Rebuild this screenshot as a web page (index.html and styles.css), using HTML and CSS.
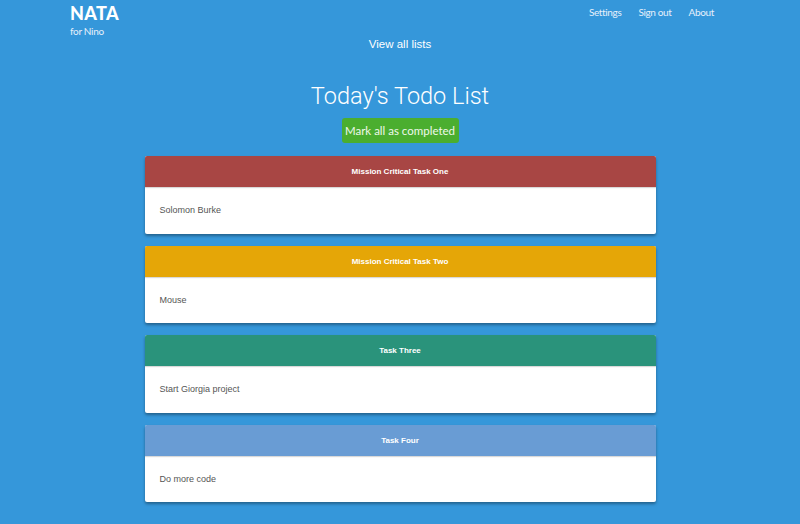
FILE: index.html
```html
<!DOCTYPE html>
<html>
<head>
<meta charset="utf-8">
<link rel="stylesheet" href="styles.css">
</head>
<body>
<header class="topbar">
  <div class="brand">
    <div class="logo">NATA</div>
    <div class="sub">for Nino</div>
  </div>
  <nav class="links">
    <a>Settings</a>
    <a>Sign out</a>
    <a>About</a>
  </nav>
</header>
<div class="viewall">View all lists</div>
<h1 class="title">Today's Todo List</h1>
<div class="btnrow"><button class="btn">Mark all as completed</button></div>
<main class="cards">
  <section class="card">
    <div class="card-head red">Mission Critical Task One</div>
    <div class="card-body">Solomon Burke</div>
  </section>
  <section class="card">
    <div class="card-head yellow">Mission Critical Task Two</div>
    <div class="card-body">Mouse</div>
  </section>
  <section class="card">
    <div class="card-head teal">Task Three</div>
    <div class="card-body">Start Giorgia project</div>
  </section>
  <section class="card">
    <div class="card-head blue">Task Four</div>
    <div class="card-body">Do more code</div>
  </section>
</main>
</body>
</html>
```
FILE: styles.css
```css
html, body { margin: 0; padding: 0; }
body {
  background: #3597da;
  font-family: "Liberation Sans", Arial, sans-serif;
  color: #fff;
  height: 524px;
  overflow: hidden;
}
.topbar {
  width: 660px;
  height: 38px;
  margin: 0 auto;
  display: flex;
  justify-content: space-between;
  align-items: flex-start;
}
.brand { padding-top: 2px; }
.logo {
  font-family: Lato, "Open Sans", sans-serif;
  font-weight: 900;
  font-size: 18px;
  line-height: 22px;
  letter-spacing: 0.4px;
}
.sub {
  font-family: Lato, sans-serif;
  font-size: 10px;
  line-height: 14px;
  letter-spacing: -0.3px;
  color: #e6f0fa;
}
.links {
  display: flex;
  gap: 17px;
  padding-right: 16px;
  padding-top: 5px;
}
.links a {
  font-family: Lato, sans-serif;
  font-size: 10px;
  line-height: 14px;
  letter-spacing: -0.35px;
  color: #e6f0fa;
}
.viewall {
  text-align: center;
  font-size: 11.5px;
  line-height: 14px;
  margin-top: -1px;
}
.title {
  margin: 30px 0 0;
  text-align: center;
  font-weight: 300;
  font-family: Roboto, "Liberation Sans", sans-serif;
  font-size: 23.5px;
  line-height: 30px;
}
.btnrow { display: flex; justify-content: center; margin-top: 7px; }
.btn {
  display: block;
  box-sizing: border-box;
  background: #4bae2f;
  color: #eef8ea;
  border: none;
  border-radius: 3px;
  font-family: Lato, sans-serif;
  font-size: 11.5px;
  line-height: 25px;
  height: 25px;
  width: 117px;
  padding: 0;
  margin: 0;
}
.cards {
  width: 511px;
  margin: 13px auto 0;
  display: flex;
  flex-direction: column;
  gap: 12px;
}
.card {
  background: #fff;
  border-radius: 2px;
  box-shadow: 0 2px 3px rgba(0,0,0,0.35);
  overflow: hidden;
}
.card-head {
  height: 31px;
  display: flex;
  align-items: center;
  justify-content: center;
  font-weight: bold;
  font-size: 8px;
  color: #fff;
  box-shadow: 0 1px 1px rgba(0,0,0,0.15);
}
.red { background: #a84644; }
.yellow { background: #e5a607; }
.teal { background: #2a937b; }
.blue { background: #699cd4; }
.card-body {
  height: 46.6px;
  display: flex;
  align-items: center;
  padding-left: 15px;
  font-size: 9px;
  color: #555;
}
```
